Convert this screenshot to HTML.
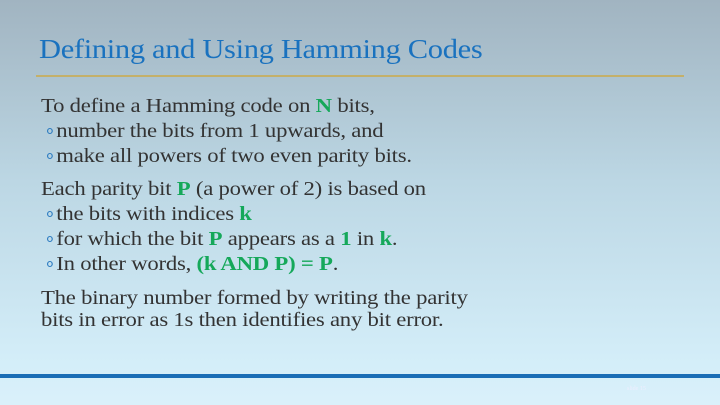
<!DOCTYPE html>
<html><head><style>
body{margin:0;width:720px;height:405px;overflow:hidden;background:linear-gradient(#a1b4c1 0%,#bcd7e4 45%,#d4eef9 90%,#daf0fa 100%);font-family:"Liberation Serif",serif;position:relative}
.t{position:absolute;left:39px;top:34px;font-size:27px;color:#1a72bf;letter-spacing:-0.3px;white-space:nowrap;transform:scaleX(1.13);transform-origin:left top}
.gl{position:absolute;left:36px;top:75px;width:648px;height:2px;background:#c4b06a}
.l{position:absolute;left:41px;font-size:19.6px;color:#333;white-space:nowrap;letter-spacing:-0.2px;transform:scaleX(1.16);transform-origin:left top}
.b{left:47px}
.b::before{content:"";display:inline-block;width:3px;height:4px;border:1px solid #2a7ac0;border-radius:50%;margin-right:3px;vertical-align:3px}
.g{color:#15a85a;font-weight:bold}
.bar{position:absolute;left:0;top:374px;width:720px;height:4px;background:#1a6db6}
.sn{position:absolute;left:627px;top:386px;font-size:6px;color:#eef;}
</style></head><body>
<div class="t">Defining and Using Hamming Codes</div>
<div class="gl"></div>
<div class="l" style="top:96px">To define a Hamming code on <span class="g">N</span> bits,</div>
<div class="l b" style="top:121px">number the bits from 1 upwards, and</div>
<div class="l b" style="top:146px">make all powers of two even parity bits.</div>
<div class="l" style="top:179px">Each parity bit <span class="g">P</span> (a power of 2) is based on</div>
<div class="l b" style="top:204px">the bits with indices <span class="g">k</span></div>
<div class="l b" style="top:229px">for which the bit <span class="g">P</span> appears as a <span class="g">1</span> in <span class="g">k</span>.</div>
<div class="l b" style="top:254px">In other words, <span class="g">(k AND P) = P</span>.</div>
<div class="l" style="top:288px">The binary number formed by writing the parity</div>
<div class="l" style="top:310px">bits in error as 1s then identifies any bit error.</div>
<div class="bar"></div>
<div class="sn">slide 15</div>
</body></html>
